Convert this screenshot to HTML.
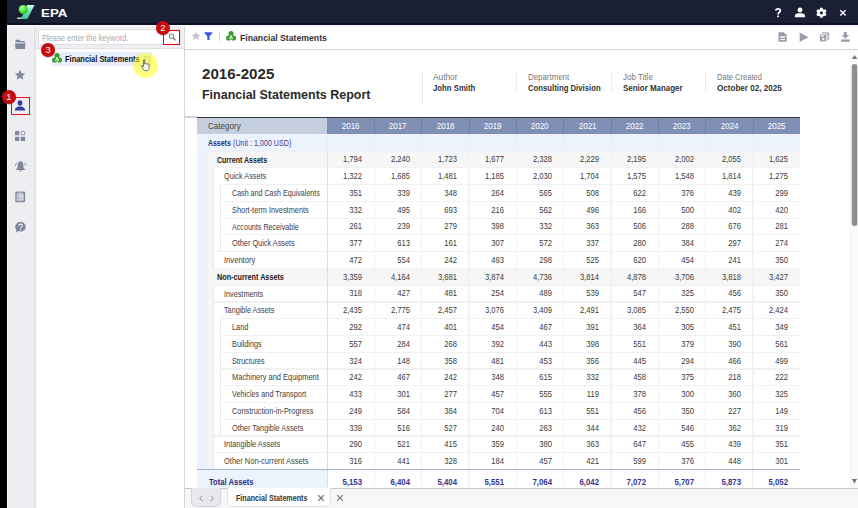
<!DOCTYPE html>
<html><head><meta charset="utf-8"><style>
html,body{margin:0;padding:0;}
body{width:858px;height:508px;overflow:hidden;position:relative;background:#fff;font-family:"Liberation Sans", sans-serif;}
body>div,body>svg{position:absolute;}
.t{white-space:pre;}
</style></head><body>
<div style="left:0px;top:0px;width:7px;height:508px;background:#000"></div>
<div style="left:7px;top:0px;width:851px;height:23.4px;background:#1b1f34"></div>
<div style="left:7px;top:23.4px;width:851px;height:1.6px;background:#0e1228"></div>
<div style="left:7px;top:25px;width:851px;height:2px;background:#f6f6f8"></div>
<div style="left:7px;top:27px;width:1px;height:481px;background:#f8f8fa"></div>
<div style="left:8px;top:27px;width:26.2px;height:481px;background:#ededf2"></div>
<div style="left:32.9px;top:27px;width:1.2px;height:481px;background:#f2f2f6"></div>
<div style="left:34.1px;top:27px;width:1.2px;height:481px;background:#d9d9de"></div>
<div style="left:35.4px;top:27px;width:148.8px;height:481px;background:#fff"></div>
<div style="left:35.4px;top:27px;width:148.8px;height:21px;background:#efeff3"></div>
<div style="left:35.4px;top:47.8px;width:148.8px;height:0.8px;background:#dedee2"></div>
<div style="left:35.3px;top:27px;width:1.3px;height:481px;background:linear-gradient(90deg,#e9e9ec,rgba(255,255,255,0))"></div>
<div style="left:38.3px;top:28.7px;width:142.8px;height:16.8px;background:#fff;border:1px solid #dfdfe3;box-sizing:border-box"></div>
<div style="left:185px;top:27px;width:673px;height:22px;background:#fff"></div>
<div style="left:184.2px;top:48.8px;width:673.8px;height:1.1px;background:#d6d6d8"></div>
<div style="left:184.1px;top:27px;width:1.1px;height:481px;background:#d6d6da"></div>
<div style="left:185.2px;top:49.9px;width:664.8px;height:438px;background:#fff"></div>
<div style="left:850px;top:50px;width:8px;height:438px;background:#fbfbfb;border-left:1px solid #f4f4f4;box-sizing:border-box"></div>
<div style="left:184.1px;top:487.6px;width:673.9px;height:1.4px;background:#c9c9cd"></div>
<div style="left:185.2px;top:489px;width:672.8px;height:19px;background:#f7f7f9"></div>
<svg style="left:16px;top:4px;width:20px;height:16px" viewBox="0 0 20 16">
<defs><linearGradient id="lg" x1="0" y1="0" x2="0" y2="1"><stop offset="0" stop-color="#d4fbf0"/><stop offset="0.5" stop-color="#6fdcb8"/><stop offset="1" stop-color="#3cc596"/></linearGradient>
<radialGradient id="rg" cx="0.35" cy="0.3" r="0.7"><stop offset="0" stop-color="#b8ffb0"/><stop offset="0.5" stop-color="#5cf04a"/><stop offset="1" stop-color="#22c41c"/></radialGradient></defs>
<polygon points="11,1.1 18.5,1.1 11.4,14.9 5.1,14.9" fill="url(#lg)"/>
<polygon points="1.5,13.6 6,13.6 5.3,14.9 0.8,14.9" fill="#cfd6de"/>
<circle cx="7.25" cy="5.5" r="4.5" fill="url(#rg)"/>
</svg>
<div class="t" style="left:41.20px;top:7.90px;font-size:11.8px;line-height:11.8px;font-weight:700;color:#ffffff;transform:scaleX(1.1316);transform-origin:left 0;">EPA</div>
<svg style="left:772px;top:6px;width:80px;height:13px" viewBox="0 0 80 13">
<path d="M3.9,4.6 C3.9,2.4 8.3,2.4 8.3,4.7 C8.3,6.5 6.1,6.4 6.1,8.6" fill="none" stroke="#fff" stroke-width="1.8"/>
<rect x="5.15" y="9.5" width="1.9" height="1.7" rx="0.4" fill="#fff"/>
<circle cx="28" cy="4" r="2.45" fill="#fff"/>
<path d="M22.9,11.3 L22.9,9.6 C22.9,7.8 25.2,7.3 28,7.3 C30.8,7.3 33,7.8 33,9.6 L33,11.3 Z" fill="#fff"/>
<g transform="translate(49.4,6.6)">
<path d="M-1.2,-4.8 L1.2,-4.8 L1.5,-3.4 L2.6,-2.8 L3.9,-3.3 L5.1,-1.3 L4.1,-0.4 L4.1,0.8 L5.1,1.7 L3.9,3.7 L2.6,3.2 L1.5,3.8 L1.2,5.2 L-1.2,5.2 L-1.5,3.8 L-2.6,3.2 L-3.9,3.7 L-5.1,1.7 L-4.1,0.8 L-4.1,-0.4 L-5.1,-1.3 L-3.9,-3.3 L-2.6,-2.8 L-1.5,-3.4 Z" fill="#fff"/>
<circle cx="0" cy="0.2" r="1.6" fill="#1b1f34"/>
</g>
<path d="M68.3,4.2 L73.6,9.6 M73.6,4.2 L68.3,9.6" stroke="#fff" stroke-width="1.4"/>
</svg>
<svg style="left:14px;top:38px;width:13px;height:13px" viewBox="0 0 13 13">
<path d="M1.5,1.8 L5.2,1.8 L6.2,2.9 L10.9,2.9 L10.9,4 L1.5,4 Z" fill="#80869b"/>
<path d="M1,4.8 L11.5,4.8 L11,10.9 L1.6,10.9 Z" fill="#80869b"/>
<rect x="1" y="4.8" width="10.5" height="1.2" fill="#a9adbc"/>
</svg>
<svg style="left:14px;top:69px;width:12px;height:12px" viewBox="0 0 24 24">
<path d="M12,1.5 L15.1,8.4 L22.6,9.1 L16.9,14.1 L18.6,21.5 L12,17.6 L5.4,21.5 L7.1,14.1 L1.4,9.1 L8.9,8.4 Z" fill="#80869b"/>
</svg>
<div style="left:11.1px;top:97.2px;width:18.6px;height:17.5px;border:1.3px solid #e8141c;box-sizing:border-box"></div>
<svg style="left:14px;top:99px;width:12px;height:12px" viewBox="0 0 12 12">
<ellipse cx="6" cy="4" rx="2.4" ry="2.8" fill="#2e3f9c"/>
<path d="M0.9,11.6 C0.9,8.6 3.2,7.6 6,7.6 C8.8,7.6 11.1,8.6 11.1,11.6 Z" fill="#2e3f9c"/>
</svg>
<svg style="left:14px;top:130px;width:12px;height:12px" viewBox="0 0 12 12">
<rect x="1" y="1" width="4.3" height="4.3" rx="0.4" fill="#80869b"/>
<rect x="7.25" y="1.45" width="3.4" height="3.4" rx="0.6" fill="#fff" stroke="#80869b" stroke-width="0.9"/>
<rect x="1" y="6.8" width="4.3" height="4.3" rx="0.4" fill="#80869b"/>
<rect x="6.8" y="6.8" width="4.3" height="4.3" rx="0.4" fill="#80869b"/>
</svg>
<svg style="left:14px;top:160px;width:13px;height:13px" viewBox="0 0 13 13">
<path d="M6.5,1.2 C4.6,1.2 3.6,3 3.6,5.2 L3.6,7.8 L1.5,9.9 L11.5,9.9 L9.4,7.8 L9.4,5.2 C9.4,3 8.4,1.2 6.5,1.2 Z" fill="#80869b"/>
<rect x="5.4" y="10.3" width="2.2" height="1.3" rx="0.6" fill="#80869b"/>
<path d="M2.6,2.8 C1.8,3.6 1.4,4.6 1.4,5.8 M10.4,2.8 C11.2,3.6 11.6,4.6 11.6,5.8" stroke="#80869b" stroke-width="0.9" fill="none"/>
</svg>
<svg style="left:14px;top:190px;width:13px;height:14px" viewBox="0 0 13 14">
<rect x="1.3" y="1.4" width="9.8" height="10.8" rx="1.2" fill="#80869b"/>
<rect x="2.7" y="3.4" width="7" height="7.4" fill="#d2d4de"/>
<rect x="4.3" y="3.4" width="0.7" height="7.4" fill="#aeb2c2"/><rect x="2.7" y="8.3" width="7" height="0.7" fill="#aeb2c2"/>
<rect x="4.2" y="1.4" width="4" height="1.2" fill="#c8cad6"/>
</svg>
<svg style="left:14px;top:221px;width:13px;height:13px" viewBox="0 0 13 13">
<path d="M6.5,0.9 C9.5,0.9 11.8,3 11.8,5.8 C11.8,8.6 9.5,10.6 6.5,10.6 C5.6,10.6 4.8,10.4 4.1,10.1 L1.8,12 L2.4,9.2 C1.6,8.3 1.2,7.1 1.2,5.8 C1.2,3 3.5,0.9 6.5,0.9 Z" fill="#80869b"/>
<path d="M4.8,4.6 C4.8,2.6 8.3,2.6 8.3,4.6 C8.3,5.9 6.6,5.9 6.6,7.3" stroke="#ededf2" stroke-width="1.2" fill="none"/>
<rect x="5.9" y="8" width="1.3" height="1.3" fill="#ededf2"/>
</svg>
<div class="t" style="left:41.70px;top:34.70px;font-size:8.2px;line-height:8.2px;font-weight:400;color:#a9a9b2;transform:scaleX(0.9147);transform-origin:left 0;">Please enter the keyword.</div>
<div style="left:163.1px;top:30.1px;width:16.8px;height:14.7px;border:1.4px solid #f00;box-sizing:border-box;background:#fff"></div>
<svg style="left:166px;top:32px;width:11px;height:11px" viewBox="0 0 11 11">
<circle cx="5.6" cy="4.25" r="2.35" fill="none" stroke="#666" stroke-width="0.95"/>
<path d="M7.3,6 L9.6,8.3" stroke="#666" stroke-width="1.1"/>
</svg>
<div style="left:52.4px;top:52px;width:99.8px;height:14px;background:#e8edfb"></div>
<svg style="left:52.3px;top:53.3px;width:11px;height:10px" viewBox="0 0 11 10">
<g fill="#3d9b28"><polygon points="5.05,2.8 2.5,7.1 7.6,7.1"/><circle cx="5.05" cy="2.65" r="2.55"/><circle cx="2.55" cy="7.05" r="2.55"/><circle cx="7.55" cy="7.05" r="2.55"/></g>
<polygon points="5.05,3.5 7.2,8.1 5.9,8.1 5.05,6.1 4.2,8.1 2.9,8.1" fill="#eef7ea"/>
</svg>
<div class="t" style="left:64.60px;top:56.10px;font-size:8.2px;line-height:8.2px;font-weight:700;color:#111;transform:scaleX(0.9108);transform-origin:left 0;">Financial Statements</div>
<div style="left:132.9px;top:52.9px;width:25.2px;height:25.2px;border-radius:50%;background:rgba(255,255,0,0.5)"></div>
<div style="left:143.5px;top:56.4px;width:6.7px;height:9.8px;border:1.2px solid rgba(190,190,90,0.28);background:rgba(200,200,120,0.12);box-sizing:border-box"></div>
<svg style="left:140px;top:58.8px;width:11px;height:13px" viewBox="0 0 11 14">
<path d="M3.3,1.3 C3.3,0.5 4.6,0.5 4.6,1.3 L4.6,5.6 L5.2,5.2 C5.4,4.8 6.5,4.8 6.6,5.4 C6.9,5 7.9,5 8,5.7 C8.3,5.4 9.3,5.5 9.3,6.3 L9.3,9.6 C9.3,11 8.6,12.4 7.6,12.6 L4.6,12.6 C3.8,12.2 2.2,9.6 1.3,8.3 C0.8,7.6 1.6,6.9 2.3,7.5 L3.3,8.5 Z" fill="#fff" stroke="#3a3a3a" stroke-width="0.75"/>
</svg>
<div style="left:1.8500000000000005px;top:89.85000000000001px;width:14.1px;height:14.1px;border-radius:50%;background:#c70a0b;box-shadow:0 0.6px 1.2px rgba(0,0,0,0.3)"></div>
<div class="t" style="left:1.90px;width:14px;text-align:center;top:93.30px;font-size:9.3px;line-height:9.3px;font-weight:400;color:#fff;">1</div>
<div style="left:155.85px;top:20.849999999999998px;width:14.1px;height:14.1px;border-radius:50%;background:#c70a0b;box-shadow:0 0.6px 1.2px rgba(0,0,0,0.3)"></div>
<div class="t" style="left:155.90px;width:14px;text-align:center;top:24.30px;font-size:9.3px;line-height:9.3px;font-weight:400;color:#fff;">2</div>
<div style="left:40.95px;top:42.85px;width:14.1px;height:14.1px;border-radius:50%;background:#c70a0b;box-shadow:0 0.6px 1.2px rgba(0,0,0,0.3)"></div>
<div class="t" style="left:41.00px;width:14px;text-align:center;top:46.30px;font-size:9.3px;line-height:9.3px;font-weight:400;color:#fff;">3</div>
<svg style="left:191px;top:31px;width:10px;height:10px" viewBox="0 0 24 24">
<path d="M12,1.5 L15.1,8.4 L22.6,9.1 L16.9,14.1 L18.6,21.5 L12,17.6 L5.4,21.5 L7.1,14.1 L1.4,9.1 L8.9,8.4 Z" fill="#c3c3cb"/>
</svg>
<svg style="left:204px;top:32px;width:9px;height:9px" viewBox="0 0 9 9">
<path d="M0.5,0.3 L8.3,0.3 L8.3,1.2 L5.5,4.3 L5.5,8 L3.3,8 L3.3,4.3 L0.5,1.2 Z" fill="#3556e8"/>
</svg>
<div style="left:218.7px;top:32px;width:1px;height:8.5px;background:#d4d4d8"></div>
<svg style="left:226.2px;top:31.3px;width:11px;height:10px" viewBox="0 0 11 10">
<g fill="#3d9b28"><polygon points="5.05,2.8 2.5,7.1 7.6,7.1"/><circle cx="5.05" cy="2.65" r="2.55"/><circle cx="2.55" cy="7.05" r="2.55"/><circle cx="7.55" cy="7.05" r="2.55"/></g>
<polygon points="5.05,3.5 7.2,8.1 5.9,8.1 5.05,6.1 4.2,8.1 2.9,8.1" fill="#eef7ea"/>
</svg>
<div class="t" style="left:240.20px;top:33.60px;font-size:9.3px;line-height:9.3px;font-weight:700;color:#333;transform:scaleX(0.9344);transform-origin:left 0;">Financial Statements</div>
<svg style="left:777px;top:31px;width:76px;height:12px" viewBox="0 0 76 12">
<path d="M1.5,1.2 L7,1.2 L9.6,3.8 L9.6,10.8 L1.5,10.8 Z" fill="#9b9bab"/>
<path d="M7.1,1.7 L9.1,3.7" stroke="#e4e4ea" stroke-width="0.6"/>
<rect x="3.2" y="5.3" width="4.8" height="1.5" fill="#fff"/><rect x="3.2" y="8.1" width="4.8" height="1.0" fill="#fff"/>
<path d="M22.7,1.5 L31.5,6.2 L22.7,10.9 Z" fill="#9b9bab"/>
<path d="M45,1.2 L51.2,1.2 L52.2,2.3 L52.2,8.7 L45,8.7 Z" fill="#9b9bab" stroke="#fff" stroke-width="0.3"/>
<rect x="46" y="2.2" width="5.2" height="5.5" fill="#c8c8d2"/>
<path d="M42.6,3.1 L48.8,3.1 L49.8,4.1 L49.8,10.8 L42.6,10.8 Z" fill="#9b9bab" stroke="#fff" stroke-width="0.8"/>
<rect x="44" y="4.3" width="3" height="1.3" fill="#fff"/><circle cx="46.3" cy="8.2" r="1.15" fill="#fff"/>
<path d="M66.8,1.1 L69.8,1.1 L69.8,3.9 L72.1,3.9 L68.3,7.7 L64.6,3.9 L66.8,3.9 Z" fill="#9b9bab"/>
<rect x="64" y="8.5" width="8.8" height="2.3" fill="#9b9bab"/>
</svg>
<svg style="left:850px;top:50px;width:8px;height:438px" viewBox="0 0 8 438">
<path d="M1.8,9 L4.55,5.1 L7.3,9 Z" fill="#777"/>
<rect x="1.8" y="14.1" width="5.5" height="162" rx="2.75" fill="#8e8e8e"/>
<path d="M1.9,429 L7.1,429 L4.5,433.4 Z" fill="#707070"/>
</svg>
<div class="t" style="left:201.80px;top:66.90px;font-size:14.2px;line-height:14.2px;font-weight:700;color:#2a2a2a;transform:scaleX(1.0656);transform-origin:left 0;">2016-2025</div>
<div class="t" style="left:201.80px;top:89.20px;font-size:12.7px;line-height:12.7px;font-weight:700;color:#2a2a2a;transform:scaleX(0.9829);transform-origin:left 0;">Financial Statements Report</div>
<div style="left:421.5px;top:70.8px;width:1px;height:33px;background:#ededed"></div>
<div class="t" style="left:433.40px;top:73.70px;font-size:8.2px;line-height:8.2px;font-weight:400;color:#777;transform:scaleX(1.0141);transform-origin:left 0;">Author</div>
<div class="t" style="left:433.40px;top:83.60px;font-size:8.6px;line-height:8.6px;font-weight:700;color:#333;transform:scaleX(0.9044);transform-origin:left 0;">John Smith</div>
<div style="left:515.8px;top:70.8px;width:1px;height:22.7px;background:#ededed"></div>
<div class="t" style="left:527.70px;top:73.70px;font-size:8.2px;line-height:8.2px;font-weight:400;color:#777;transform:scaleX(0.9614);transform-origin:left 0;">Department</div>
<div class="t" style="left:527.70px;top:83.60px;font-size:8.6px;line-height:8.6px;font-weight:700;color:#333;transform:scaleX(0.9000);transform-origin:left 0;">Consulting Division</div>
<div style="left:610.8px;top:70.8px;width:1px;height:22.7px;background:#ededed"></div>
<div class="t" style="left:622.70px;top:73.70px;font-size:8.2px;line-height:8.2px;font-weight:400;color:#777;transform:scaleX(0.9784);transform-origin:left 0;">Job Title</div>
<div class="t" style="left:622.70px;top:83.60px;font-size:8.6px;line-height:8.6px;font-weight:700;color:#333;transform:scaleX(0.9248);transform-origin:left 0;">Senior Manager</div>
<div style="left:704.9px;top:70.8px;width:1px;height:22.7px;background:#ededed"></div>
<div class="t" style="left:716.80px;top:73.70px;font-size:8.2px;line-height:8.2px;font-weight:400;color:#777;transform:scaleX(0.9241);transform-origin:left 0;">Date Created</div>
<div class="t" style="left:716.80px;top:83.60px;font-size:8.6px;line-height:8.6px;font-weight:700;color:#333;transform:scaleX(0.9397);transform-origin:left 0;">October 02, 2025</div>
<div style="left:185px;top:116.4px;width:12px;height:1.4px;background:#d2d2d2"></div>
<div style="left:197px;top:116.6px;width:603.4px;height:1.3px;background:#3a3a3a"></div>
<div style="left:197px;top:117.9px;width:130.10000000000002px;height:15.8px;background:#c5cedf"></div>
<div style="left:327.1px;top:117.9px;width:473.29999999999995px;height:15.8px;background:#7f8fb5"></div>
<div style="left:373.93px;top:117.9px;width:1px;height:15.8px;background:#6e7ea8"></div>
<div style="left:421.26px;top:117.9px;width:1px;height:15.8px;background:#6e7ea8"></div>
<div style="left:468.59000000000003px;top:117.9px;width:1px;height:15.8px;background:#6e7ea8"></div>
<div style="left:515.9200000000001px;top:117.9px;width:1px;height:15.8px;background:#6e7ea8"></div>
<div style="left:563.25px;top:117.9px;width:1px;height:15.8px;background:#6e7ea8"></div>
<div style="left:610.58px;top:117.9px;width:1px;height:15.8px;background:#6e7ea8"></div>
<div style="left:657.9100000000001px;top:117.9px;width:1px;height:15.8px;background:#6e7ea8"></div>
<div style="left:705.24px;top:117.9px;width:1px;height:15.8px;background:#6e7ea8"></div>
<div style="left:752.5699999999999px;top:117.9px;width:1px;height:15.8px;background:#6e7ea8"></div>
<div class="t" style="left:208.30px;top:122.80px;font-size:8.2px;line-height:8.2px;font-weight:400;color:#444;transform:scaleX(0.9853);transform-origin:left 0;">Category</div>
<div class="t" style="left:327.10px;width:47.33px;text-align:center;top:122.90px;font-size:8.2px;line-height:8.2px;font-weight:400;color:#fff;transform:scaleX(0.9793);transform-origin:center 0;">2016</div>
<div class="t" style="left:374.43px;width:47.33px;text-align:center;top:122.90px;font-size:8.2px;line-height:8.2px;font-weight:400;color:#fff;transform:scaleX(0.9793);transform-origin:center 0;">2017</div>
<div class="t" style="left:421.76px;width:47.33px;text-align:center;top:122.90px;font-size:8.2px;line-height:8.2px;font-weight:400;color:#fff;transform:scaleX(0.9793);transform-origin:center 0;">2018</div>
<div class="t" style="left:469.09px;width:47.33px;text-align:center;top:122.90px;font-size:8.2px;line-height:8.2px;font-weight:400;color:#fff;transform:scaleX(0.9793);transform-origin:center 0;">2019</div>
<div class="t" style="left:516.42px;width:47.33px;text-align:center;top:122.90px;font-size:8.2px;line-height:8.2px;font-weight:400;color:#fff;transform:scaleX(0.9793);transform-origin:center 0;">2020</div>
<div class="t" style="left:563.75px;width:47.33px;text-align:center;top:122.90px;font-size:8.2px;line-height:8.2px;font-weight:400;color:#fff;transform:scaleX(0.9793);transform-origin:center 0;">2021</div>
<div class="t" style="left:611.08px;width:47.33px;text-align:center;top:122.90px;font-size:8.2px;line-height:8.2px;font-weight:400;color:#fff;transform:scaleX(0.9793);transform-origin:center 0;">2022</div>
<div class="t" style="left:658.41px;width:47.33px;text-align:center;top:122.90px;font-size:8.2px;line-height:8.2px;font-weight:400;color:#fff;transform:scaleX(0.9793);transform-origin:center 0;">2023</div>
<div class="t" style="left:705.74px;width:47.33px;text-align:center;top:122.90px;font-size:8.2px;line-height:8.2px;font-weight:400;color:#fff;transform:scaleX(0.9793);transform-origin:center 0;">2024</div>
<div class="t" style="left:753.07px;width:47.33px;text-align:center;top:122.90px;font-size:8.2px;line-height:8.2px;font-weight:400;color:#fff;transform:scaleX(0.9793);transform-origin:center 0;">2025</div>
<div style="left:197px;top:133.7px;width:603.4px;height:16.9px;background:#ecf3fd"></div>
<div class="t" style="left:208.30px;top:140.20px;font-size:8.2px;line-height:8.2px;font-weight:700;color:#2b2b7e;transform:scaleX(0.8472);transform-origin:left 0;">Assets</div>
<div class="t" style="left:232.80px;top:140.20px;font-size:8.2px;line-height:8.2px;font-weight:400;color:#3b3b9a;transform:scaleX(0.8711);transform-origin:left 0;">(Unit : 1,000 USD)</div>
<div style="left:197px;top:150.6px;width:9.199999999999989px;height:318.44000000000005px;background:#ecf3fd"></div>
<div style="left:206.2px;top:150.6px;width:7.0px;height:117.32000000000001px;background:#f6f6f6"></div>
<div style="left:206.2px;top:267.92px;width:7.0px;height:201.12px;background:#f6f6f6"></div>
<div style="left:206.2px;top:150.6px;width:594.2px;height:16.76px;background:#f6f6f6"></div>
<div style="left:206.2px;top:150.6px;width:0.9px;height:16.76px;background:#e9e9e9"></div>
<div style="left:206.2px;top:150.5px;width:594.2px;height:1.2px;background:#f1f1f1"></div>
<div class="t" style="left:217.10px;top:156.50px;font-size:8.2px;line-height:8.2px;font-weight:700;color:#202020;transform:scaleX(0.8571);transform-origin:left 0;">Current Assets</div>
<div class="t" style="left:62.23px;width:300px;text-align:right;top:155.40px;font-size:8.3px;line-height:8.3px;font-weight:400;color:#3a3a3a;transform:scaleX(0.92);transform-origin:right 0;">1,794</div>
<div class="t" style="left:109.56px;width:300px;text-align:right;top:155.40px;font-size:8.3px;line-height:8.3px;font-weight:400;color:#3a3a3a;transform:scaleX(0.92);transform-origin:right 0;">2,240</div>
<div class="t" style="left:156.89px;width:300px;text-align:right;top:155.40px;font-size:8.3px;line-height:8.3px;font-weight:400;color:#3a3a3a;transform:scaleX(0.92);transform-origin:right 0;">1,723</div>
<div class="t" style="left:204.22px;width:300px;text-align:right;top:155.40px;font-size:8.3px;line-height:8.3px;font-weight:400;color:#3a3a3a;transform:scaleX(0.92);transform-origin:right 0;">1,677</div>
<div class="t" style="left:251.55px;width:300px;text-align:right;top:155.40px;font-size:8.3px;line-height:8.3px;font-weight:400;color:#3a3a3a;transform:scaleX(0.92);transform-origin:right 0;">2,328</div>
<div class="t" style="left:298.88px;width:300px;text-align:right;top:155.40px;font-size:8.3px;line-height:8.3px;font-weight:400;color:#3a3a3a;transform:scaleX(0.92);transform-origin:right 0;">2,229</div>
<div class="t" style="left:346.21px;width:300px;text-align:right;top:155.40px;font-size:8.3px;line-height:8.3px;font-weight:400;color:#3a3a3a;transform:scaleX(0.92);transform-origin:right 0;">2,195</div>
<div class="t" style="left:393.54px;width:300px;text-align:right;top:155.40px;font-size:8.3px;line-height:8.3px;font-weight:400;color:#3a3a3a;transform:scaleX(0.92);transform-origin:right 0;">2,002</div>
<div class="t" style="left:440.87px;width:300px;text-align:right;top:155.40px;font-size:8.3px;line-height:8.3px;font-weight:400;color:#3a3a3a;transform:scaleX(0.92);transform-origin:right 0;">2,055</div>
<div class="t" style="left:488.20px;width:300px;text-align:right;top:155.40px;font-size:8.3px;line-height:8.3px;font-weight:400;color:#3a3a3a;transform:scaleX(0.92);transform-origin:right 0;">1,625</div>
<div style="left:213.2px;top:167.35999999999999px;width:587.2px;height:16.76px;background:#ffffff"></div>
<div style="left:213.2px;top:167.35999999999999px;width:0.9px;height:16.76px;background:#e9e9e9"></div>
<div style="left:213.2px;top:167.26px;width:587.2px;height:1.2px;background:#f1f1f1"></div>
<div class="t" style="left:224.30px;top:173.26px;font-size:8.2px;line-height:8.2px;font-weight:400;color:#404040;transform:scaleX(0.8913);transform-origin:left 0;">Quick Assets</div>
<div class="t" style="left:62.23px;width:300px;text-align:right;top:172.16px;font-size:8.3px;line-height:8.3px;font-weight:400;color:#3a3a3a;transform:scaleX(0.92);transform-origin:right 0;">1,322</div>
<div class="t" style="left:109.56px;width:300px;text-align:right;top:172.16px;font-size:8.3px;line-height:8.3px;font-weight:400;color:#3a3a3a;transform:scaleX(0.92);transform-origin:right 0;">1,685</div>
<div class="t" style="left:156.89px;width:300px;text-align:right;top:172.16px;font-size:8.3px;line-height:8.3px;font-weight:400;color:#3a3a3a;transform:scaleX(0.92);transform-origin:right 0;">1,481</div>
<div class="t" style="left:204.22px;width:300px;text-align:right;top:172.16px;font-size:8.3px;line-height:8.3px;font-weight:400;color:#3a3a3a;transform:scaleX(0.92);transform-origin:right 0;">1,185</div>
<div class="t" style="left:251.55px;width:300px;text-align:right;top:172.16px;font-size:8.3px;line-height:8.3px;font-weight:400;color:#3a3a3a;transform:scaleX(0.92);transform-origin:right 0;">2,030</div>
<div class="t" style="left:298.88px;width:300px;text-align:right;top:172.16px;font-size:8.3px;line-height:8.3px;font-weight:400;color:#3a3a3a;transform:scaleX(0.92);transform-origin:right 0;">1,704</div>
<div class="t" style="left:346.21px;width:300px;text-align:right;top:172.16px;font-size:8.3px;line-height:8.3px;font-weight:400;color:#3a3a3a;transform:scaleX(0.92);transform-origin:right 0;">1,575</div>
<div class="t" style="left:393.54px;width:300px;text-align:right;top:172.16px;font-size:8.3px;line-height:8.3px;font-weight:400;color:#3a3a3a;transform:scaleX(0.92);transform-origin:right 0;">1,548</div>
<div class="t" style="left:440.87px;width:300px;text-align:right;top:172.16px;font-size:8.3px;line-height:8.3px;font-weight:400;color:#3a3a3a;transform:scaleX(0.92);transform-origin:right 0;">1,814</div>
<div class="t" style="left:488.20px;width:300px;text-align:right;top:172.16px;font-size:8.3px;line-height:8.3px;font-weight:400;color:#3a3a3a;transform:scaleX(0.92);transform-origin:right 0;">1,275</div>
<div style="left:220.1px;top:184.12px;width:580.3px;height:16.76px;background:#ffffff"></div>
<div style="left:220.1px;top:184.12px;width:0.9px;height:16.76px;background:#e9e9e9"></div>
<div style="left:220.1px;top:184.02px;width:580.3px;height:1.2px;background:#f1f1f1"></div>
<div class="t" style="left:231.60px;top:190.02px;font-size:8.2px;line-height:8.2px;font-weight:400;color:#404040;transform:scaleX(0.8696);transform-origin:left 0;">Cash and Cash Equivalents</div>
<div class="t" style="left:62.23px;width:300px;text-align:right;top:188.92px;font-size:8.3px;line-height:8.3px;font-weight:400;color:#3a3a3a;transform:scaleX(0.92);transform-origin:right 0;">351</div>
<div class="t" style="left:109.56px;width:300px;text-align:right;top:188.92px;font-size:8.3px;line-height:8.3px;font-weight:400;color:#3a3a3a;transform:scaleX(0.92);transform-origin:right 0;">339</div>
<div class="t" style="left:156.89px;width:300px;text-align:right;top:188.92px;font-size:8.3px;line-height:8.3px;font-weight:400;color:#3a3a3a;transform:scaleX(0.92);transform-origin:right 0;">348</div>
<div class="t" style="left:204.22px;width:300px;text-align:right;top:188.92px;font-size:8.3px;line-height:8.3px;font-weight:400;color:#3a3a3a;transform:scaleX(0.92);transform-origin:right 0;">264</div>
<div class="t" style="left:251.55px;width:300px;text-align:right;top:188.92px;font-size:8.3px;line-height:8.3px;font-weight:400;color:#3a3a3a;transform:scaleX(0.92);transform-origin:right 0;">565</div>
<div class="t" style="left:298.88px;width:300px;text-align:right;top:188.92px;font-size:8.3px;line-height:8.3px;font-weight:400;color:#3a3a3a;transform:scaleX(0.92);transform-origin:right 0;">508</div>
<div class="t" style="left:346.21px;width:300px;text-align:right;top:188.92px;font-size:8.3px;line-height:8.3px;font-weight:400;color:#3a3a3a;transform:scaleX(0.92);transform-origin:right 0;">622</div>
<div class="t" style="left:393.54px;width:300px;text-align:right;top:188.92px;font-size:8.3px;line-height:8.3px;font-weight:400;color:#3a3a3a;transform:scaleX(0.92);transform-origin:right 0;">376</div>
<div class="t" style="left:440.87px;width:300px;text-align:right;top:188.92px;font-size:8.3px;line-height:8.3px;font-weight:400;color:#3a3a3a;transform:scaleX(0.92);transform-origin:right 0;">439</div>
<div class="t" style="left:488.20px;width:300px;text-align:right;top:188.92px;font-size:8.3px;line-height:8.3px;font-weight:400;color:#3a3a3a;transform:scaleX(0.92);transform-origin:right 0;">299</div>
<div style="left:220.1px;top:200.88px;width:580.3px;height:16.76px;background:#ffffff"></div>
<div style="left:220.1px;top:200.88px;width:0.9px;height:16.76px;background:#e9e9e9"></div>
<div style="left:220.1px;top:200.78px;width:580.3px;height:1.2px;background:#f1f1f1"></div>
<div class="t" style="left:231.60px;top:206.78px;font-size:8.2px;line-height:8.2px;font-weight:400;color:#404040;transform:scaleX(0.9024);transform-origin:left 0;">Short-term Investments</div>
<div class="t" style="left:62.23px;width:300px;text-align:right;top:205.68px;font-size:8.3px;line-height:8.3px;font-weight:400;color:#3a3a3a;transform:scaleX(0.92);transform-origin:right 0;">332</div>
<div class="t" style="left:109.56px;width:300px;text-align:right;top:205.68px;font-size:8.3px;line-height:8.3px;font-weight:400;color:#3a3a3a;transform:scaleX(0.92);transform-origin:right 0;">495</div>
<div class="t" style="left:156.89px;width:300px;text-align:right;top:205.68px;font-size:8.3px;line-height:8.3px;font-weight:400;color:#3a3a3a;transform:scaleX(0.92);transform-origin:right 0;">693</div>
<div class="t" style="left:204.22px;width:300px;text-align:right;top:205.68px;font-size:8.3px;line-height:8.3px;font-weight:400;color:#3a3a3a;transform:scaleX(0.92);transform-origin:right 0;">216</div>
<div class="t" style="left:251.55px;width:300px;text-align:right;top:205.68px;font-size:8.3px;line-height:8.3px;font-weight:400;color:#3a3a3a;transform:scaleX(0.92);transform-origin:right 0;">562</div>
<div class="t" style="left:298.88px;width:300px;text-align:right;top:205.68px;font-size:8.3px;line-height:8.3px;font-weight:400;color:#3a3a3a;transform:scaleX(0.92);transform-origin:right 0;">496</div>
<div class="t" style="left:346.21px;width:300px;text-align:right;top:205.68px;font-size:8.3px;line-height:8.3px;font-weight:400;color:#3a3a3a;transform:scaleX(0.92);transform-origin:right 0;">166</div>
<div class="t" style="left:393.54px;width:300px;text-align:right;top:205.68px;font-size:8.3px;line-height:8.3px;font-weight:400;color:#3a3a3a;transform:scaleX(0.92);transform-origin:right 0;">500</div>
<div class="t" style="left:440.87px;width:300px;text-align:right;top:205.68px;font-size:8.3px;line-height:8.3px;font-weight:400;color:#3a3a3a;transform:scaleX(0.92);transform-origin:right 0;">402</div>
<div class="t" style="left:488.20px;width:300px;text-align:right;top:205.68px;font-size:8.3px;line-height:8.3px;font-weight:400;color:#3a3a3a;transform:scaleX(0.92);transform-origin:right 0;">420</div>
<div style="left:220.1px;top:217.64px;width:580.3px;height:16.76px;background:#ffffff"></div>
<div style="left:220.1px;top:217.64px;width:0.9px;height:16.76px;background:#e9e9e9"></div>
<div style="left:220.1px;top:217.54px;width:580.3px;height:1.2px;background:#f1f1f1"></div>
<div class="t" style="left:231.60px;top:223.54px;font-size:8.2px;line-height:8.2px;font-weight:400;color:#404040;transform:scaleX(0.8732);transform-origin:left 0;">Accounts Receivable</div>
<div class="t" style="left:62.23px;width:300px;text-align:right;top:222.44px;font-size:8.3px;line-height:8.3px;font-weight:400;color:#3a3a3a;transform:scaleX(0.92);transform-origin:right 0;">261</div>
<div class="t" style="left:109.56px;width:300px;text-align:right;top:222.44px;font-size:8.3px;line-height:8.3px;font-weight:400;color:#3a3a3a;transform:scaleX(0.92);transform-origin:right 0;">239</div>
<div class="t" style="left:156.89px;width:300px;text-align:right;top:222.44px;font-size:8.3px;line-height:8.3px;font-weight:400;color:#3a3a3a;transform:scaleX(0.92);transform-origin:right 0;">279</div>
<div class="t" style="left:204.22px;width:300px;text-align:right;top:222.44px;font-size:8.3px;line-height:8.3px;font-weight:400;color:#3a3a3a;transform:scaleX(0.92);transform-origin:right 0;">398</div>
<div class="t" style="left:251.55px;width:300px;text-align:right;top:222.44px;font-size:8.3px;line-height:8.3px;font-weight:400;color:#3a3a3a;transform:scaleX(0.92);transform-origin:right 0;">332</div>
<div class="t" style="left:298.88px;width:300px;text-align:right;top:222.44px;font-size:8.3px;line-height:8.3px;font-weight:400;color:#3a3a3a;transform:scaleX(0.92);transform-origin:right 0;">363</div>
<div class="t" style="left:346.21px;width:300px;text-align:right;top:222.44px;font-size:8.3px;line-height:8.3px;font-weight:400;color:#3a3a3a;transform:scaleX(0.92);transform-origin:right 0;">506</div>
<div class="t" style="left:393.54px;width:300px;text-align:right;top:222.44px;font-size:8.3px;line-height:8.3px;font-weight:400;color:#3a3a3a;transform:scaleX(0.92);transform-origin:right 0;">288</div>
<div class="t" style="left:440.87px;width:300px;text-align:right;top:222.44px;font-size:8.3px;line-height:8.3px;font-weight:400;color:#3a3a3a;transform:scaleX(0.92);transform-origin:right 0;">676</div>
<div class="t" style="left:488.20px;width:300px;text-align:right;top:222.44px;font-size:8.3px;line-height:8.3px;font-weight:400;color:#3a3a3a;transform:scaleX(0.92);transform-origin:right 0;">281</div>
<div style="left:220.1px;top:234.4px;width:580.3px;height:16.76px;background:#ffffff"></div>
<div style="left:220.1px;top:234.4px;width:0.9px;height:16.76px;background:#e9e9e9"></div>
<div style="left:220.1px;top:234.3px;width:580.3px;height:1.2px;background:#f1f1f1"></div>
<div class="t" style="left:231.60px;top:240.30px;font-size:8.2px;line-height:8.2px;font-weight:400;color:#404040;transform:scaleX(0.8960);transform-origin:left 0;">Other Quick Assets</div>
<div class="t" style="left:62.23px;width:300px;text-align:right;top:239.20px;font-size:8.3px;line-height:8.3px;font-weight:400;color:#3a3a3a;transform:scaleX(0.92);transform-origin:right 0;">377</div>
<div class="t" style="left:109.56px;width:300px;text-align:right;top:239.20px;font-size:8.3px;line-height:8.3px;font-weight:400;color:#3a3a3a;transform:scaleX(0.92);transform-origin:right 0;">613</div>
<div class="t" style="left:156.89px;width:300px;text-align:right;top:239.20px;font-size:8.3px;line-height:8.3px;font-weight:400;color:#3a3a3a;transform:scaleX(0.92);transform-origin:right 0;">161</div>
<div class="t" style="left:204.22px;width:300px;text-align:right;top:239.20px;font-size:8.3px;line-height:8.3px;font-weight:400;color:#3a3a3a;transform:scaleX(0.92);transform-origin:right 0;">307</div>
<div class="t" style="left:251.55px;width:300px;text-align:right;top:239.20px;font-size:8.3px;line-height:8.3px;font-weight:400;color:#3a3a3a;transform:scaleX(0.92);transform-origin:right 0;">572</div>
<div class="t" style="left:298.88px;width:300px;text-align:right;top:239.20px;font-size:8.3px;line-height:8.3px;font-weight:400;color:#3a3a3a;transform:scaleX(0.92);transform-origin:right 0;">337</div>
<div class="t" style="left:346.21px;width:300px;text-align:right;top:239.20px;font-size:8.3px;line-height:8.3px;font-weight:400;color:#3a3a3a;transform:scaleX(0.92);transform-origin:right 0;">280</div>
<div class="t" style="left:393.54px;width:300px;text-align:right;top:239.20px;font-size:8.3px;line-height:8.3px;font-weight:400;color:#3a3a3a;transform:scaleX(0.92);transform-origin:right 0;">384</div>
<div class="t" style="left:440.87px;width:300px;text-align:right;top:239.20px;font-size:8.3px;line-height:8.3px;font-weight:400;color:#3a3a3a;transform:scaleX(0.92);transform-origin:right 0;">297</div>
<div class="t" style="left:488.20px;width:300px;text-align:right;top:239.20px;font-size:8.3px;line-height:8.3px;font-weight:400;color:#3a3a3a;transform:scaleX(0.92);transform-origin:right 0;">274</div>
<div style="left:213.2px;top:251.16px;width:587.2px;height:16.76px;background:#ffffff"></div>
<div style="left:213.2px;top:251.16px;width:0.9px;height:16.76px;background:#e9e9e9"></div>
<div style="left:213.2px;top:251.06px;width:587.2px;height:1.2px;background:#f1f1f1"></div>
<div class="t" style="left:224.30px;top:257.06px;font-size:8.2px;line-height:8.2px;font-weight:400;color:#404040;transform:scaleX(0.9294);transform-origin:left 0;">Inventory</div>
<div class="t" style="left:62.23px;width:300px;text-align:right;top:255.96px;font-size:8.3px;line-height:8.3px;font-weight:400;color:#3a3a3a;transform:scaleX(0.92);transform-origin:right 0;">472</div>
<div class="t" style="left:109.56px;width:300px;text-align:right;top:255.96px;font-size:8.3px;line-height:8.3px;font-weight:400;color:#3a3a3a;transform:scaleX(0.92);transform-origin:right 0;">554</div>
<div class="t" style="left:156.89px;width:300px;text-align:right;top:255.96px;font-size:8.3px;line-height:8.3px;font-weight:400;color:#3a3a3a;transform:scaleX(0.92);transform-origin:right 0;">242</div>
<div class="t" style="left:204.22px;width:300px;text-align:right;top:255.96px;font-size:8.3px;line-height:8.3px;font-weight:400;color:#3a3a3a;transform:scaleX(0.92);transform-origin:right 0;">493</div>
<div class="t" style="left:251.55px;width:300px;text-align:right;top:255.96px;font-size:8.3px;line-height:8.3px;font-weight:400;color:#3a3a3a;transform:scaleX(0.92);transform-origin:right 0;">298</div>
<div class="t" style="left:298.88px;width:300px;text-align:right;top:255.96px;font-size:8.3px;line-height:8.3px;font-weight:400;color:#3a3a3a;transform:scaleX(0.92);transform-origin:right 0;">525</div>
<div class="t" style="left:346.21px;width:300px;text-align:right;top:255.96px;font-size:8.3px;line-height:8.3px;font-weight:400;color:#3a3a3a;transform:scaleX(0.92);transform-origin:right 0;">620</div>
<div class="t" style="left:393.54px;width:300px;text-align:right;top:255.96px;font-size:8.3px;line-height:8.3px;font-weight:400;color:#3a3a3a;transform:scaleX(0.92);transform-origin:right 0;">454</div>
<div class="t" style="left:440.87px;width:300px;text-align:right;top:255.96px;font-size:8.3px;line-height:8.3px;font-weight:400;color:#3a3a3a;transform:scaleX(0.92);transform-origin:right 0;">241</div>
<div class="t" style="left:488.20px;width:300px;text-align:right;top:255.96px;font-size:8.3px;line-height:8.3px;font-weight:400;color:#3a3a3a;transform:scaleX(0.92);transform-origin:right 0;">350</div>
<div style="left:206.2px;top:267.92px;width:594.2px;height:16.76px;background:#f6f6f6"></div>
<div style="left:206.2px;top:267.92px;width:0.9px;height:16.76px;background:#e9e9e9"></div>
<div style="left:206.2px;top:267.82px;width:594.2px;height:1.2px;background:#f1f1f1"></div>
<div class="t" style="left:217.10px;top:273.82px;font-size:8.2px;line-height:8.2px;font-weight:700;color:#202020;transform:scaleX(0.8836);transform-origin:left 0;">Non-current Assets</div>
<div class="t" style="left:62.23px;width:300px;text-align:right;top:272.72px;font-size:8.3px;line-height:8.3px;font-weight:400;color:#3a3a3a;transform:scaleX(0.92);transform-origin:right 0;">3,359</div>
<div class="t" style="left:109.56px;width:300px;text-align:right;top:272.72px;font-size:8.3px;line-height:8.3px;font-weight:400;color:#3a3a3a;transform:scaleX(0.92);transform-origin:right 0;">4,164</div>
<div class="t" style="left:156.89px;width:300px;text-align:right;top:272.72px;font-size:8.3px;line-height:8.3px;font-weight:400;color:#3a3a3a;transform:scaleX(0.92);transform-origin:right 0;">3,681</div>
<div class="t" style="left:204.22px;width:300px;text-align:right;top:272.72px;font-size:8.3px;line-height:8.3px;font-weight:400;color:#3a3a3a;transform:scaleX(0.92);transform-origin:right 0;">3,874</div>
<div class="t" style="left:251.55px;width:300px;text-align:right;top:272.72px;font-size:8.3px;line-height:8.3px;font-weight:400;color:#3a3a3a;transform:scaleX(0.92);transform-origin:right 0;">4,736</div>
<div class="t" style="left:298.88px;width:300px;text-align:right;top:272.72px;font-size:8.3px;line-height:8.3px;font-weight:400;color:#3a3a3a;transform:scaleX(0.92);transform-origin:right 0;">3,814</div>
<div class="t" style="left:346.21px;width:300px;text-align:right;top:272.72px;font-size:8.3px;line-height:8.3px;font-weight:400;color:#3a3a3a;transform:scaleX(0.92);transform-origin:right 0;">4,878</div>
<div class="t" style="left:393.54px;width:300px;text-align:right;top:272.72px;font-size:8.3px;line-height:8.3px;font-weight:400;color:#3a3a3a;transform:scaleX(0.92);transform-origin:right 0;">3,706</div>
<div class="t" style="left:440.87px;width:300px;text-align:right;top:272.72px;font-size:8.3px;line-height:8.3px;font-weight:400;color:#3a3a3a;transform:scaleX(0.92);transform-origin:right 0;">3,818</div>
<div class="t" style="left:488.20px;width:300px;text-align:right;top:272.72px;font-size:8.3px;line-height:8.3px;font-weight:400;color:#3a3a3a;transform:scaleX(0.92);transform-origin:right 0;">3,427</div>
<div style="left:213.2px;top:284.68px;width:587.2px;height:16.76px;background:#ffffff"></div>
<div style="left:213.2px;top:284.68px;width:0.9px;height:16.76px;background:#e9e9e9"></div>
<div style="left:213.2px;top:284.58px;width:587.2px;height:1.2px;background:#f1f1f1"></div>
<div class="t" style="left:224.30px;top:290.58px;font-size:8.2px;line-height:8.2px;font-weight:400;color:#404040;transform:scaleX(0.8877);transform-origin:left 0;">Investments</div>
<div class="t" style="left:62.23px;width:300px;text-align:right;top:289.48px;font-size:8.3px;line-height:8.3px;font-weight:400;color:#3a3a3a;transform:scaleX(0.92);transform-origin:right 0;">318</div>
<div class="t" style="left:109.56px;width:300px;text-align:right;top:289.48px;font-size:8.3px;line-height:8.3px;font-weight:400;color:#3a3a3a;transform:scaleX(0.92);transform-origin:right 0;">427</div>
<div class="t" style="left:156.89px;width:300px;text-align:right;top:289.48px;font-size:8.3px;line-height:8.3px;font-weight:400;color:#3a3a3a;transform:scaleX(0.92);transform-origin:right 0;">481</div>
<div class="t" style="left:204.22px;width:300px;text-align:right;top:289.48px;font-size:8.3px;line-height:8.3px;font-weight:400;color:#3a3a3a;transform:scaleX(0.92);transform-origin:right 0;">254</div>
<div class="t" style="left:251.55px;width:300px;text-align:right;top:289.48px;font-size:8.3px;line-height:8.3px;font-weight:400;color:#3a3a3a;transform:scaleX(0.92);transform-origin:right 0;">489</div>
<div class="t" style="left:298.88px;width:300px;text-align:right;top:289.48px;font-size:8.3px;line-height:8.3px;font-weight:400;color:#3a3a3a;transform:scaleX(0.92);transform-origin:right 0;">539</div>
<div class="t" style="left:346.21px;width:300px;text-align:right;top:289.48px;font-size:8.3px;line-height:8.3px;font-weight:400;color:#3a3a3a;transform:scaleX(0.92);transform-origin:right 0;">547</div>
<div class="t" style="left:393.54px;width:300px;text-align:right;top:289.48px;font-size:8.3px;line-height:8.3px;font-weight:400;color:#3a3a3a;transform:scaleX(0.92);transform-origin:right 0;">325</div>
<div class="t" style="left:440.87px;width:300px;text-align:right;top:289.48px;font-size:8.3px;line-height:8.3px;font-weight:400;color:#3a3a3a;transform:scaleX(0.92);transform-origin:right 0;">456</div>
<div class="t" style="left:488.20px;width:300px;text-align:right;top:289.48px;font-size:8.3px;line-height:8.3px;font-weight:400;color:#3a3a3a;transform:scaleX(0.92);transform-origin:right 0;">350</div>
<div style="left:213.2px;top:301.44px;width:587.2px;height:16.76px;background:#ffffff"></div>
<div style="left:213.2px;top:301.44px;width:0.9px;height:16.76px;background:#e9e9e9"></div>
<div style="left:213.2px;top:301.34px;width:587.2px;height:1.2px;background:#f1f1f1"></div>
<div class="t" style="left:224.30px;top:307.34px;font-size:8.2px;line-height:8.2px;font-weight:400;color:#404040;transform:scaleX(0.8853);transform-origin:left 0;">Tangible Assets</div>
<div class="t" style="left:62.23px;width:300px;text-align:right;top:306.24px;font-size:8.3px;line-height:8.3px;font-weight:400;color:#3a3a3a;transform:scaleX(0.92);transform-origin:right 0;">2,435</div>
<div class="t" style="left:109.56px;width:300px;text-align:right;top:306.24px;font-size:8.3px;line-height:8.3px;font-weight:400;color:#3a3a3a;transform:scaleX(0.92);transform-origin:right 0;">2,775</div>
<div class="t" style="left:156.89px;width:300px;text-align:right;top:306.24px;font-size:8.3px;line-height:8.3px;font-weight:400;color:#3a3a3a;transform:scaleX(0.92);transform-origin:right 0;">2,457</div>
<div class="t" style="left:204.22px;width:300px;text-align:right;top:306.24px;font-size:8.3px;line-height:8.3px;font-weight:400;color:#3a3a3a;transform:scaleX(0.92);transform-origin:right 0;">3,076</div>
<div class="t" style="left:251.55px;width:300px;text-align:right;top:306.24px;font-size:8.3px;line-height:8.3px;font-weight:400;color:#3a3a3a;transform:scaleX(0.92);transform-origin:right 0;">3,409</div>
<div class="t" style="left:298.88px;width:300px;text-align:right;top:306.24px;font-size:8.3px;line-height:8.3px;font-weight:400;color:#3a3a3a;transform:scaleX(0.92);transform-origin:right 0;">2,491</div>
<div class="t" style="left:346.21px;width:300px;text-align:right;top:306.24px;font-size:8.3px;line-height:8.3px;font-weight:400;color:#3a3a3a;transform:scaleX(0.92);transform-origin:right 0;">3,085</div>
<div class="t" style="left:393.54px;width:300px;text-align:right;top:306.24px;font-size:8.3px;line-height:8.3px;font-weight:400;color:#3a3a3a;transform:scaleX(0.92);transform-origin:right 0;">2,550</div>
<div class="t" style="left:440.87px;width:300px;text-align:right;top:306.24px;font-size:8.3px;line-height:8.3px;font-weight:400;color:#3a3a3a;transform:scaleX(0.92);transform-origin:right 0;">2,475</div>
<div class="t" style="left:488.20px;width:300px;text-align:right;top:306.24px;font-size:8.3px;line-height:8.3px;font-weight:400;color:#3a3a3a;transform:scaleX(0.92);transform-origin:right 0;">2,424</div>
<div style="left:220.1px;top:318.20000000000005px;width:580.3px;height:16.76px;background:#ffffff"></div>
<div style="left:220.1px;top:318.20000000000005px;width:0.9px;height:16.76px;background:#e9e9e9"></div>
<div style="left:220.1px;top:318.1px;width:580.3px;height:1.2px;background:#f1f1f1"></div>
<div class="t" style="left:231.60px;top:324.10px;font-size:8.2px;line-height:8.2px;font-weight:400;color:#404040;transform:scaleX(0.8939);transform-origin:left 0;">Land</div>
<div class="t" style="left:62.23px;width:300px;text-align:right;top:323.00px;font-size:8.3px;line-height:8.3px;font-weight:400;color:#3a3a3a;transform:scaleX(0.92);transform-origin:right 0;">292</div>
<div class="t" style="left:109.56px;width:300px;text-align:right;top:323.00px;font-size:8.3px;line-height:8.3px;font-weight:400;color:#3a3a3a;transform:scaleX(0.92);transform-origin:right 0;">474</div>
<div class="t" style="left:156.89px;width:300px;text-align:right;top:323.00px;font-size:8.3px;line-height:8.3px;font-weight:400;color:#3a3a3a;transform:scaleX(0.92);transform-origin:right 0;">401</div>
<div class="t" style="left:204.22px;width:300px;text-align:right;top:323.00px;font-size:8.3px;line-height:8.3px;font-weight:400;color:#3a3a3a;transform:scaleX(0.92);transform-origin:right 0;">454</div>
<div class="t" style="left:251.55px;width:300px;text-align:right;top:323.00px;font-size:8.3px;line-height:8.3px;font-weight:400;color:#3a3a3a;transform:scaleX(0.92);transform-origin:right 0;">467</div>
<div class="t" style="left:298.88px;width:300px;text-align:right;top:323.00px;font-size:8.3px;line-height:8.3px;font-weight:400;color:#3a3a3a;transform:scaleX(0.92);transform-origin:right 0;">391</div>
<div class="t" style="left:346.21px;width:300px;text-align:right;top:323.00px;font-size:8.3px;line-height:8.3px;font-weight:400;color:#3a3a3a;transform:scaleX(0.92);transform-origin:right 0;">364</div>
<div class="t" style="left:393.54px;width:300px;text-align:right;top:323.00px;font-size:8.3px;line-height:8.3px;font-weight:400;color:#3a3a3a;transform:scaleX(0.92);transform-origin:right 0;">305</div>
<div class="t" style="left:440.87px;width:300px;text-align:right;top:323.00px;font-size:8.3px;line-height:8.3px;font-weight:400;color:#3a3a3a;transform:scaleX(0.92);transform-origin:right 0;">451</div>
<div class="t" style="left:488.20px;width:300px;text-align:right;top:323.00px;font-size:8.3px;line-height:8.3px;font-weight:400;color:#3a3a3a;transform:scaleX(0.92);transform-origin:right 0;">349</div>
<div style="left:220.1px;top:334.96000000000004px;width:580.3px;height:16.76px;background:#ffffff"></div>
<div style="left:220.1px;top:334.96000000000004px;width:0.9px;height:16.76px;background:#e9e9e9"></div>
<div style="left:220.1px;top:334.86px;width:580.3px;height:1.2px;background:#f1f1f1"></div>
<div class="t" style="left:231.60px;top:340.86px;font-size:8.2px;line-height:8.2px;font-weight:400;color:#404040;transform:scaleX(0.8963);transform-origin:left 0;">Buildings</div>
<div class="t" style="left:62.23px;width:300px;text-align:right;top:339.76px;font-size:8.3px;line-height:8.3px;font-weight:400;color:#3a3a3a;transform:scaleX(0.92);transform-origin:right 0;">557</div>
<div class="t" style="left:109.56px;width:300px;text-align:right;top:339.76px;font-size:8.3px;line-height:8.3px;font-weight:400;color:#3a3a3a;transform:scaleX(0.92);transform-origin:right 0;">284</div>
<div class="t" style="left:156.89px;width:300px;text-align:right;top:339.76px;font-size:8.3px;line-height:8.3px;font-weight:400;color:#3a3a3a;transform:scaleX(0.92);transform-origin:right 0;">268</div>
<div class="t" style="left:204.22px;width:300px;text-align:right;top:339.76px;font-size:8.3px;line-height:8.3px;font-weight:400;color:#3a3a3a;transform:scaleX(0.92);transform-origin:right 0;">392</div>
<div class="t" style="left:251.55px;width:300px;text-align:right;top:339.76px;font-size:8.3px;line-height:8.3px;font-weight:400;color:#3a3a3a;transform:scaleX(0.92);transform-origin:right 0;">443</div>
<div class="t" style="left:298.88px;width:300px;text-align:right;top:339.76px;font-size:8.3px;line-height:8.3px;font-weight:400;color:#3a3a3a;transform:scaleX(0.92);transform-origin:right 0;">398</div>
<div class="t" style="left:346.21px;width:300px;text-align:right;top:339.76px;font-size:8.3px;line-height:8.3px;font-weight:400;color:#3a3a3a;transform:scaleX(0.92);transform-origin:right 0;">551</div>
<div class="t" style="left:393.54px;width:300px;text-align:right;top:339.76px;font-size:8.3px;line-height:8.3px;font-weight:400;color:#3a3a3a;transform:scaleX(0.92);transform-origin:right 0;">379</div>
<div class="t" style="left:440.87px;width:300px;text-align:right;top:339.76px;font-size:8.3px;line-height:8.3px;font-weight:400;color:#3a3a3a;transform:scaleX(0.92);transform-origin:right 0;">390</div>
<div class="t" style="left:488.20px;width:300px;text-align:right;top:339.76px;font-size:8.3px;line-height:8.3px;font-weight:400;color:#3a3a3a;transform:scaleX(0.92);transform-origin:right 0;">561</div>
<div style="left:220.1px;top:351.72px;width:580.3px;height:16.76px;background:#ffffff"></div>
<div style="left:220.1px;top:351.72px;width:0.9px;height:16.76px;background:#e9e9e9"></div>
<div style="left:220.1px;top:351.62px;width:580.3px;height:1.2px;background:#f1f1f1"></div>
<div class="t" style="left:231.60px;top:357.62px;font-size:8.2px;line-height:8.2px;font-weight:400;color:#404040;transform:scaleX(0.8730);transform-origin:left 0;">Structures</div>
<div class="t" style="left:62.23px;width:300px;text-align:right;top:356.52px;font-size:8.3px;line-height:8.3px;font-weight:400;color:#3a3a3a;transform:scaleX(0.92);transform-origin:right 0;">324</div>
<div class="t" style="left:109.56px;width:300px;text-align:right;top:356.52px;font-size:8.3px;line-height:8.3px;font-weight:400;color:#3a3a3a;transform:scaleX(0.92);transform-origin:right 0;">148</div>
<div class="t" style="left:156.89px;width:300px;text-align:right;top:356.52px;font-size:8.3px;line-height:8.3px;font-weight:400;color:#3a3a3a;transform:scaleX(0.92);transform-origin:right 0;">358</div>
<div class="t" style="left:204.22px;width:300px;text-align:right;top:356.52px;font-size:8.3px;line-height:8.3px;font-weight:400;color:#3a3a3a;transform:scaleX(0.92);transform-origin:right 0;">481</div>
<div class="t" style="left:251.55px;width:300px;text-align:right;top:356.52px;font-size:8.3px;line-height:8.3px;font-weight:400;color:#3a3a3a;transform:scaleX(0.92);transform-origin:right 0;">453</div>
<div class="t" style="left:298.88px;width:300px;text-align:right;top:356.52px;font-size:8.3px;line-height:8.3px;font-weight:400;color:#3a3a3a;transform:scaleX(0.92);transform-origin:right 0;">356</div>
<div class="t" style="left:346.21px;width:300px;text-align:right;top:356.52px;font-size:8.3px;line-height:8.3px;font-weight:400;color:#3a3a3a;transform:scaleX(0.92);transform-origin:right 0;">445</div>
<div class="t" style="left:393.54px;width:300px;text-align:right;top:356.52px;font-size:8.3px;line-height:8.3px;font-weight:400;color:#3a3a3a;transform:scaleX(0.92);transform-origin:right 0;">294</div>
<div class="t" style="left:440.87px;width:300px;text-align:right;top:356.52px;font-size:8.3px;line-height:8.3px;font-weight:400;color:#3a3a3a;transform:scaleX(0.92);transform-origin:right 0;">466</div>
<div class="t" style="left:488.20px;width:300px;text-align:right;top:356.52px;font-size:8.3px;line-height:8.3px;font-weight:400;color:#3a3a3a;transform:scaleX(0.92);transform-origin:right 0;">499</div>
<div style="left:220.1px;top:368.48px;width:580.3px;height:16.76px;background:#ffffff"></div>
<div style="left:220.1px;top:368.48px;width:0.9px;height:16.76px;background:#e9e9e9"></div>
<div style="left:220.1px;top:368.38px;width:580.3px;height:1.2px;background:#f1f1f1"></div>
<div class="t" style="left:231.60px;top:374.38px;font-size:8.2px;line-height:8.2px;font-weight:400;color:#404040;transform:scaleX(0.9125);transform-origin:left 0;">Machinery and Equipment</div>
<div class="t" style="left:62.23px;width:300px;text-align:right;top:373.28px;font-size:8.3px;line-height:8.3px;font-weight:400;color:#3a3a3a;transform:scaleX(0.92);transform-origin:right 0;">242</div>
<div class="t" style="left:109.56px;width:300px;text-align:right;top:373.28px;font-size:8.3px;line-height:8.3px;font-weight:400;color:#3a3a3a;transform:scaleX(0.92);transform-origin:right 0;">467</div>
<div class="t" style="left:156.89px;width:300px;text-align:right;top:373.28px;font-size:8.3px;line-height:8.3px;font-weight:400;color:#3a3a3a;transform:scaleX(0.92);transform-origin:right 0;">242</div>
<div class="t" style="left:204.22px;width:300px;text-align:right;top:373.28px;font-size:8.3px;line-height:8.3px;font-weight:400;color:#3a3a3a;transform:scaleX(0.92);transform-origin:right 0;">348</div>
<div class="t" style="left:251.55px;width:300px;text-align:right;top:373.28px;font-size:8.3px;line-height:8.3px;font-weight:400;color:#3a3a3a;transform:scaleX(0.92);transform-origin:right 0;">615</div>
<div class="t" style="left:298.88px;width:300px;text-align:right;top:373.28px;font-size:8.3px;line-height:8.3px;font-weight:400;color:#3a3a3a;transform:scaleX(0.92);transform-origin:right 0;">332</div>
<div class="t" style="left:346.21px;width:300px;text-align:right;top:373.28px;font-size:8.3px;line-height:8.3px;font-weight:400;color:#3a3a3a;transform:scaleX(0.92);transform-origin:right 0;">458</div>
<div class="t" style="left:393.54px;width:300px;text-align:right;top:373.28px;font-size:8.3px;line-height:8.3px;font-weight:400;color:#3a3a3a;transform:scaleX(0.92);transform-origin:right 0;">375</div>
<div class="t" style="left:440.87px;width:300px;text-align:right;top:373.28px;font-size:8.3px;line-height:8.3px;font-weight:400;color:#3a3a3a;transform:scaleX(0.92);transform-origin:right 0;">218</div>
<div class="t" style="left:488.20px;width:300px;text-align:right;top:373.28px;font-size:8.3px;line-height:8.3px;font-weight:400;color:#3a3a3a;transform:scaleX(0.92);transform-origin:right 0;">222</div>
<div style="left:220.1px;top:385.24px;width:580.3px;height:16.76px;background:#ffffff"></div>
<div style="left:220.1px;top:385.24px;width:0.9px;height:16.76px;background:#e9e9e9"></div>
<div style="left:220.1px;top:385.14px;width:580.3px;height:1.2px;background:#f1f1f1"></div>
<div class="t" style="left:231.60px;top:391.14px;font-size:8.2px;line-height:8.2px;font-weight:400;color:#404040;transform:scaleX(0.8930);transform-origin:left 0;">Vehicles and Transport</div>
<div class="t" style="left:62.23px;width:300px;text-align:right;top:390.04px;font-size:8.3px;line-height:8.3px;font-weight:400;color:#3a3a3a;transform:scaleX(0.92);transform-origin:right 0;">433</div>
<div class="t" style="left:109.56px;width:300px;text-align:right;top:390.04px;font-size:8.3px;line-height:8.3px;font-weight:400;color:#3a3a3a;transform:scaleX(0.92);transform-origin:right 0;">301</div>
<div class="t" style="left:156.89px;width:300px;text-align:right;top:390.04px;font-size:8.3px;line-height:8.3px;font-weight:400;color:#3a3a3a;transform:scaleX(0.92);transform-origin:right 0;">277</div>
<div class="t" style="left:204.22px;width:300px;text-align:right;top:390.04px;font-size:8.3px;line-height:8.3px;font-weight:400;color:#3a3a3a;transform:scaleX(0.92);transform-origin:right 0;">457</div>
<div class="t" style="left:251.55px;width:300px;text-align:right;top:390.04px;font-size:8.3px;line-height:8.3px;font-weight:400;color:#3a3a3a;transform:scaleX(0.92);transform-origin:right 0;">555</div>
<div class="t" style="left:298.88px;width:300px;text-align:right;top:390.04px;font-size:8.3px;line-height:8.3px;font-weight:400;color:#3a3a3a;transform:scaleX(0.92);transform-origin:right 0;">119</div>
<div class="t" style="left:346.21px;width:300px;text-align:right;top:390.04px;font-size:8.3px;line-height:8.3px;font-weight:400;color:#3a3a3a;transform:scaleX(0.92);transform-origin:right 0;">378</div>
<div class="t" style="left:393.54px;width:300px;text-align:right;top:390.04px;font-size:8.3px;line-height:8.3px;font-weight:400;color:#3a3a3a;transform:scaleX(0.92);transform-origin:right 0;">300</div>
<div class="t" style="left:440.87px;width:300px;text-align:right;top:390.04px;font-size:8.3px;line-height:8.3px;font-weight:400;color:#3a3a3a;transform:scaleX(0.92);transform-origin:right 0;">360</div>
<div class="t" style="left:488.20px;width:300px;text-align:right;top:390.04px;font-size:8.3px;line-height:8.3px;font-weight:400;color:#3a3a3a;transform:scaleX(0.92);transform-origin:right 0;">325</div>
<div style="left:220.1px;top:402.0px;width:580.3px;height:16.76px;background:#ffffff"></div>
<div style="left:220.1px;top:402.0px;width:0.9px;height:16.76px;background:#e9e9e9"></div>
<div style="left:220.1px;top:401.9px;width:580.3px;height:1.2px;background:#f1f1f1"></div>
<div class="t" style="left:231.60px;top:407.90px;font-size:8.2px;line-height:8.2px;font-weight:400;color:#404040;transform:scaleX(0.8987);transform-origin:left 0;">Construction-in-Progress</div>
<div class="t" style="left:62.23px;width:300px;text-align:right;top:406.80px;font-size:8.3px;line-height:8.3px;font-weight:400;color:#3a3a3a;transform:scaleX(0.92);transform-origin:right 0;">249</div>
<div class="t" style="left:109.56px;width:300px;text-align:right;top:406.80px;font-size:8.3px;line-height:8.3px;font-weight:400;color:#3a3a3a;transform:scaleX(0.92);transform-origin:right 0;">584</div>
<div class="t" style="left:156.89px;width:300px;text-align:right;top:406.80px;font-size:8.3px;line-height:8.3px;font-weight:400;color:#3a3a3a;transform:scaleX(0.92);transform-origin:right 0;">384</div>
<div class="t" style="left:204.22px;width:300px;text-align:right;top:406.80px;font-size:8.3px;line-height:8.3px;font-weight:400;color:#3a3a3a;transform:scaleX(0.92);transform-origin:right 0;">704</div>
<div class="t" style="left:251.55px;width:300px;text-align:right;top:406.80px;font-size:8.3px;line-height:8.3px;font-weight:400;color:#3a3a3a;transform:scaleX(0.92);transform-origin:right 0;">613</div>
<div class="t" style="left:298.88px;width:300px;text-align:right;top:406.80px;font-size:8.3px;line-height:8.3px;font-weight:400;color:#3a3a3a;transform:scaleX(0.92);transform-origin:right 0;">551</div>
<div class="t" style="left:346.21px;width:300px;text-align:right;top:406.80px;font-size:8.3px;line-height:8.3px;font-weight:400;color:#3a3a3a;transform:scaleX(0.92);transform-origin:right 0;">456</div>
<div class="t" style="left:393.54px;width:300px;text-align:right;top:406.80px;font-size:8.3px;line-height:8.3px;font-weight:400;color:#3a3a3a;transform:scaleX(0.92);transform-origin:right 0;">350</div>
<div class="t" style="left:440.87px;width:300px;text-align:right;top:406.80px;font-size:8.3px;line-height:8.3px;font-weight:400;color:#3a3a3a;transform:scaleX(0.92);transform-origin:right 0;">227</div>
<div class="t" style="left:488.20px;width:300px;text-align:right;top:406.80px;font-size:8.3px;line-height:8.3px;font-weight:400;color:#3a3a3a;transform:scaleX(0.92);transform-origin:right 0;">149</div>
<div style="left:220.1px;top:418.76px;width:580.3px;height:16.76px;background:#ffffff"></div>
<div style="left:220.1px;top:418.76px;width:0.9px;height:16.76px;background:#e9e9e9"></div>
<div style="left:220.1px;top:418.65999999999997px;width:580.3px;height:1.2px;background:#f1f1f1"></div>
<div class="t" style="left:231.60px;top:424.66px;font-size:8.2px;line-height:8.2px;font-weight:400;color:#404040;transform:scaleX(0.8980);transform-origin:left 0;">Other Tangible Assets</div>
<div class="t" style="left:62.23px;width:300px;text-align:right;top:423.56px;font-size:8.3px;line-height:8.3px;font-weight:400;color:#3a3a3a;transform:scaleX(0.92);transform-origin:right 0;">339</div>
<div class="t" style="left:109.56px;width:300px;text-align:right;top:423.56px;font-size:8.3px;line-height:8.3px;font-weight:400;color:#3a3a3a;transform:scaleX(0.92);transform-origin:right 0;">516</div>
<div class="t" style="left:156.89px;width:300px;text-align:right;top:423.56px;font-size:8.3px;line-height:8.3px;font-weight:400;color:#3a3a3a;transform:scaleX(0.92);transform-origin:right 0;">527</div>
<div class="t" style="left:204.22px;width:300px;text-align:right;top:423.56px;font-size:8.3px;line-height:8.3px;font-weight:400;color:#3a3a3a;transform:scaleX(0.92);transform-origin:right 0;">240</div>
<div class="t" style="left:251.55px;width:300px;text-align:right;top:423.56px;font-size:8.3px;line-height:8.3px;font-weight:400;color:#3a3a3a;transform:scaleX(0.92);transform-origin:right 0;">263</div>
<div class="t" style="left:298.88px;width:300px;text-align:right;top:423.56px;font-size:8.3px;line-height:8.3px;font-weight:400;color:#3a3a3a;transform:scaleX(0.92);transform-origin:right 0;">344</div>
<div class="t" style="left:346.21px;width:300px;text-align:right;top:423.56px;font-size:8.3px;line-height:8.3px;font-weight:400;color:#3a3a3a;transform:scaleX(0.92);transform-origin:right 0;">432</div>
<div class="t" style="left:393.54px;width:300px;text-align:right;top:423.56px;font-size:8.3px;line-height:8.3px;font-weight:400;color:#3a3a3a;transform:scaleX(0.92);transform-origin:right 0;">546</div>
<div class="t" style="left:440.87px;width:300px;text-align:right;top:423.56px;font-size:8.3px;line-height:8.3px;font-weight:400;color:#3a3a3a;transform:scaleX(0.92);transform-origin:right 0;">362</div>
<div class="t" style="left:488.20px;width:300px;text-align:right;top:423.56px;font-size:8.3px;line-height:8.3px;font-weight:400;color:#3a3a3a;transform:scaleX(0.92);transform-origin:right 0;">319</div>
<div style="left:213.2px;top:435.52px;width:587.2px;height:16.76px;background:#ffffff"></div>
<div style="left:213.2px;top:435.52px;width:0.9px;height:16.76px;background:#e9e9e9"></div>
<div style="left:213.2px;top:435.41999999999996px;width:587.2px;height:1.2px;background:#f1f1f1"></div>
<div class="t" style="left:224.30px;top:441.42px;font-size:8.2px;line-height:8.2px;font-weight:400;color:#404040;transform:scaleX(0.9061);transform-origin:left 0;">Intangible Assets</div>
<div class="t" style="left:62.23px;width:300px;text-align:right;top:440.32px;font-size:8.3px;line-height:8.3px;font-weight:400;color:#3a3a3a;transform:scaleX(0.92);transform-origin:right 0;">290</div>
<div class="t" style="left:109.56px;width:300px;text-align:right;top:440.32px;font-size:8.3px;line-height:8.3px;font-weight:400;color:#3a3a3a;transform:scaleX(0.92);transform-origin:right 0;">521</div>
<div class="t" style="left:156.89px;width:300px;text-align:right;top:440.32px;font-size:8.3px;line-height:8.3px;font-weight:400;color:#3a3a3a;transform:scaleX(0.92);transform-origin:right 0;">415</div>
<div class="t" style="left:204.22px;width:300px;text-align:right;top:440.32px;font-size:8.3px;line-height:8.3px;font-weight:400;color:#3a3a3a;transform:scaleX(0.92);transform-origin:right 0;">359</div>
<div class="t" style="left:251.55px;width:300px;text-align:right;top:440.32px;font-size:8.3px;line-height:8.3px;font-weight:400;color:#3a3a3a;transform:scaleX(0.92);transform-origin:right 0;">380</div>
<div class="t" style="left:298.88px;width:300px;text-align:right;top:440.32px;font-size:8.3px;line-height:8.3px;font-weight:400;color:#3a3a3a;transform:scaleX(0.92);transform-origin:right 0;">363</div>
<div class="t" style="left:346.21px;width:300px;text-align:right;top:440.32px;font-size:8.3px;line-height:8.3px;font-weight:400;color:#3a3a3a;transform:scaleX(0.92);transform-origin:right 0;">647</div>
<div class="t" style="left:393.54px;width:300px;text-align:right;top:440.32px;font-size:8.3px;line-height:8.3px;font-weight:400;color:#3a3a3a;transform:scaleX(0.92);transform-origin:right 0;">455</div>
<div class="t" style="left:440.87px;width:300px;text-align:right;top:440.32px;font-size:8.3px;line-height:8.3px;font-weight:400;color:#3a3a3a;transform:scaleX(0.92);transform-origin:right 0;">439</div>
<div class="t" style="left:488.20px;width:300px;text-align:right;top:440.32px;font-size:8.3px;line-height:8.3px;font-weight:400;color:#3a3a3a;transform:scaleX(0.92);transform-origin:right 0;">351</div>
<div style="left:213.2px;top:452.28px;width:587.2px;height:16.76px;background:#ffffff"></div>
<div style="left:213.2px;top:452.28px;width:0.9px;height:16.76px;background:#e9e9e9"></div>
<div style="left:213.2px;top:452.17999999999995px;width:587.2px;height:1.2px;background:#f1f1f1"></div>
<div class="t" style="left:224.30px;top:458.18px;font-size:8.2px;line-height:8.2px;font-weight:400;color:#404040;transform:scaleX(0.9148);transform-origin:left 0;">Other Non-current Assets</div>
<div class="t" style="left:62.23px;width:300px;text-align:right;top:457.08px;font-size:8.3px;line-height:8.3px;font-weight:400;color:#3a3a3a;transform:scaleX(0.92);transform-origin:right 0;">316</div>
<div class="t" style="left:109.56px;width:300px;text-align:right;top:457.08px;font-size:8.3px;line-height:8.3px;font-weight:400;color:#3a3a3a;transform:scaleX(0.92);transform-origin:right 0;">441</div>
<div class="t" style="left:156.89px;width:300px;text-align:right;top:457.08px;font-size:8.3px;line-height:8.3px;font-weight:400;color:#3a3a3a;transform:scaleX(0.92);transform-origin:right 0;">328</div>
<div class="t" style="left:204.22px;width:300px;text-align:right;top:457.08px;font-size:8.3px;line-height:8.3px;font-weight:400;color:#3a3a3a;transform:scaleX(0.92);transform-origin:right 0;">184</div>
<div class="t" style="left:251.55px;width:300px;text-align:right;top:457.08px;font-size:8.3px;line-height:8.3px;font-weight:400;color:#3a3a3a;transform:scaleX(0.92);transform-origin:right 0;">457</div>
<div class="t" style="left:298.88px;width:300px;text-align:right;top:457.08px;font-size:8.3px;line-height:8.3px;font-weight:400;color:#3a3a3a;transform:scaleX(0.92);transform-origin:right 0;">421</div>
<div class="t" style="left:346.21px;width:300px;text-align:right;top:457.08px;font-size:8.3px;line-height:8.3px;font-weight:400;color:#3a3a3a;transform:scaleX(0.92);transform-origin:right 0;">599</div>
<div class="t" style="left:393.54px;width:300px;text-align:right;top:457.08px;font-size:8.3px;line-height:8.3px;font-weight:400;color:#3a3a3a;transform:scaleX(0.92);transform-origin:right 0;">376</div>
<div class="t" style="left:440.87px;width:300px;text-align:right;top:457.08px;font-size:8.3px;line-height:8.3px;font-weight:400;color:#3a3a3a;transform:scaleX(0.92);transform-origin:right 0;">448</div>
<div class="t" style="left:488.20px;width:300px;text-align:right;top:457.08px;font-size:8.3px;line-height:8.3px;font-weight:400;color:#3a3a3a;transform:scaleX(0.92);transform-origin:right 0;">301</div>
<div style="left:213.2px;top:167.35999999999999px;width:0.9px;height:100.56px;background:#e9e9e9"></div>
<div style="left:213.2px;top:284.68px;width:0.9px;height:184.36px;background:#e9e9e9"></div>
<div style="left:206.2px;top:150.6px;width:0.9px;height:318.44000000000005px;background:#e9e9e9"></div>
<div style="left:326.6px;top:150.6px;width:1px;height:336.44000000000005px;background:#dedede"></div>
<div style="left:373.73px;top:150.6px;width:1.4px;height:336.44000000000005px;background:#f2f2f2"></div>
<div style="left:421.06px;top:150.6px;width:1.4px;height:336.44000000000005px;background:#f2f2f2"></div>
<div style="left:468.39000000000004px;top:150.6px;width:1.4px;height:336.44000000000005px;background:#f2f2f2"></div>
<div style="left:515.72px;top:150.6px;width:1.4px;height:336.44000000000005px;background:#f2f2f2"></div>
<div style="left:563.05px;top:150.6px;width:1.4px;height:336.44000000000005px;background:#f2f2f2"></div>
<div style="left:610.38px;top:150.6px;width:1.4px;height:336.44000000000005px;background:#f2f2f2"></div>
<div style="left:657.71px;top:150.6px;width:1.4px;height:336.44000000000005px;background:#f2f2f2"></div>
<div style="left:705.04px;top:150.6px;width:1.4px;height:336.44000000000005px;background:#f2f2f2"></div>
<div style="left:752.3699999999999px;top:150.6px;width:1.4px;height:336.44000000000005px;background:#f2f2f2"></div>
<div style="left:326.6px;top:133.7px;width:1px;height:16.9px;background:#e6eef9"></div>
<div style="left:373.93px;top:133.7px;width:1px;height:16.9px;background:#e6eef9"></div>
<div style="left:421.26px;top:133.7px;width:1px;height:16.9px;background:#e6eef9"></div>
<div style="left:468.59000000000003px;top:133.7px;width:1px;height:16.9px;background:#e6eef9"></div>
<div style="left:515.9200000000001px;top:133.7px;width:1px;height:16.9px;background:#e6eef9"></div>
<div style="left:563.25px;top:133.7px;width:1px;height:16.9px;background:#e6eef9"></div>
<div style="left:610.58px;top:133.7px;width:1px;height:16.9px;background:#e6eef9"></div>
<div style="left:657.9100000000001px;top:133.7px;width:1px;height:16.9px;background:#e6eef9"></div>
<div style="left:705.24px;top:133.7px;width:1px;height:16.9px;background:#e6eef9"></div>
<div style="left:752.5699999999999px;top:133.7px;width:1px;height:16.9px;background:#e6eef9"></div>
<div style="left:197px;top:469.0px;width:603.4px;height:0.9px;background:#a3b0d3"></div>
<div style="left:197px;top:469.9px;width:130.10000000000002px;height:18px;background:#ecf3fd"></div>
<div class="t" style="left:208.70px;top:478.70px;font-size:8.2px;line-height:8.2px;font-weight:700;color:#2b2b7e;transform:scaleX(0.9316);transform-origin:left 0;">Total Assets</div>
<div class="t" style="left:62.23px;width:300px;text-align:right;top:477.80px;font-size:8.4px;line-height:8.4px;font-weight:700;color:#343490;transform:scaleX(0.93);transform-origin:right 0;">5,153</div>
<div class="t" style="left:109.56px;width:300px;text-align:right;top:477.80px;font-size:8.4px;line-height:8.4px;font-weight:700;color:#343490;transform:scaleX(0.93);transform-origin:right 0;">6,404</div>
<div class="t" style="left:156.89px;width:300px;text-align:right;top:477.80px;font-size:8.4px;line-height:8.4px;font-weight:700;color:#343490;transform:scaleX(0.93);transform-origin:right 0;">5,404</div>
<div class="t" style="left:204.22px;width:300px;text-align:right;top:477.80px;font-size:8.4px;line-height:8.4px;font-weight:700;color:#343490;transform:scaleX(0.93);transform-origin:right 0;">5,551</div>
<div class="t" style="left:251.55px;width:300px;text-align:right;top:477.80px;font-size:8.4px;line-height:8.4px;font-weight:700;color:#343490;transform:scaleX(0.93);transform-origin:right 0;">7,064</div>
<div class="t" style="left:298.88px;width:300px;text-align:right;top:477.80px;font-size:8.4px;line-height:8.4px;font-weight:700;color:#343490;transform:scaleX(0.93);transform-origin:right 0;">6,042</div>
<div class="t" style="left:346.21px;width:300px;text-align:right;top:477.80px;font-size:8.4px;line-height:8.4px;font-weight:700;color:#343490;transform:scaleX(0.93);transform-origin:right 0;">7,072</div>
<div class="t" style="left:393.54px;width:300px;text-align:right;top:477.80px;font-size:8.4px;line-height:8.4px;font-weight:700;color:#343490;transform:scaleX(0.93);transform-origin:right 0;">5,707</div>
<div class="t" style="left:440.87px;width:300px;text-align:right;top:477.80px;font-size:8.4px;line-height:8.4px;font-weight:700;color:#343490;transform:scaleX(0.93);transform-origin:right 0;">5,873</div>
<div class="t" style="left:488.20px;width:300px;text-align:right;top:477.80px;font-size:8.4px;line-height:8.4px;font-weight:700;color:#343490;transform:scaleX(0.93);transform-origin:right 0;">5,052</div>
<div style="left:190.5px;top:488.4px;width:30px;height:18.4px;background:#e8e8ee;border:1px solid #d2d2da;border-top:none;border-radius:0 0 5px 5px;box-sizing:border-box"></div>
<svg style="left:196px;top:493px;width:22px;height:10px" viewBox="0 0 22 10">
<path d="M6.6,2.6 L3.8,5.4 L6.6,8.2 M14.6,2.6 L17.4,5.4 L14.6,8.2" stroke="#8a8a92" stroke-width="1" fill="none"/>
</svg>
<div style="left:226.6px;top:488.4px;width:104px;height:18.2px;background:#fff;border:1px solid #e2e2e6;border-top:none;border-radius:0 0 5px 5px;box-sizing:border-box"></div>
<div class="t" style="left:235.60px;top:494.80px;font-size:8.2px;line-height:8.2px;font-weight:700;color:#333;transform:scaleX(0.8714);transform-origin:left 0;">Financial Statements</div>
<svg style="left:316px;top:494px;width:30px;height:8px" viewBox="0 0 30 8">
<path d="M2.2,1.2 L7.8,6.8 M7.8,1.2 L2.2,6.8" stroke="#666" stroke-width="1.1"/>
<path d="M21.2,1.2 L26.8,6.8 M26.8,1.2 L21.2,6.8" stroke="#777" stroke-width="1.1"/>
</svg>
</body></html>
